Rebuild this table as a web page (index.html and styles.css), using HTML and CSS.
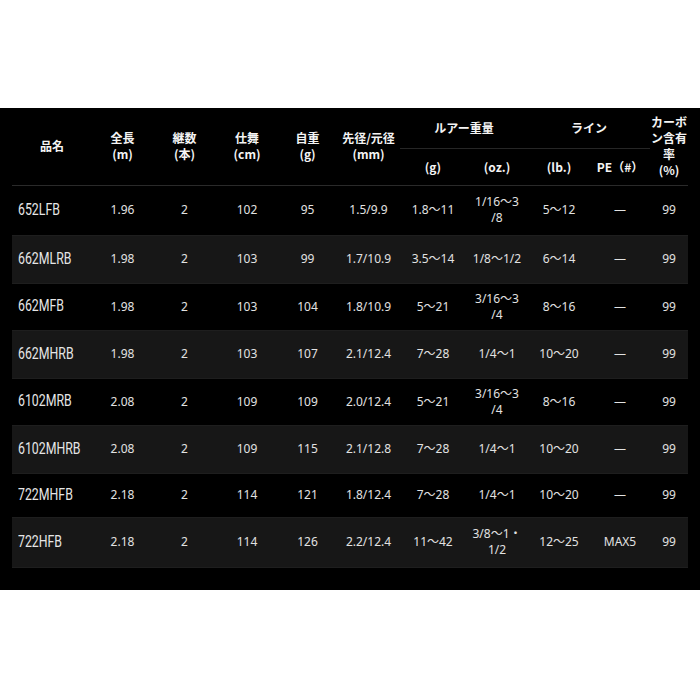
FILE: index.html
```html
<!DOCTYPE html>
<html lang="ja">
<head>
<meta charset="utf-8">
<title>Spec</title>
<link rel="stylesheet" href="styles.css">
</head>
<body>
<div class="panel">
  <table class="spec">
    <colgroup>
      <col class="c-name"><col class="c-len"><col class="c-pc"><col class="c-cl"><col class="c-wt"><col class="c-dia"><col class="c-g"><col class="c-oz"><col class="c-lb"><col class="c-pe"><col class="c-cb">
    </colgroup>
    <thead>
      <tr class="h1">
        <th rowspan="2" class="hname">品名</th>
        <th rowspan="2">全長<br>(m)</th>
        <th rowspan="2">継数<br>(本)</th>
        <th rowspan="2">仕舞<br>(cm)</th>
        <th rowspan="2">自重<br>(g)</th>
        <th rowspan="2">先径/元径<br>(mm)</th>
        <th colspan="2" class="group">ルアー重量</th>
        <th colspan="2" class="group">ライン</th>
        <th rowspan="2">カーボ<br>ン含有<br>率<br>(%)</th>
      </tr>
      <tr class="h2">
        <th>(g)</th>
        <th>(oz.)</th>
        <th>(lb.)</th>
        <th>PE（#）</th>
      </tr>
    </thead>
    <tbody>
      <tr class="r50"><td class="name"><span class="model">652LFB</span></td><td>1.96</td><td>2</td><td>102</td><td>95</td><td>1.5/9.9</td><td>1.8～11</td><td>1/16～3<br>/8</td><td>5～12</td><td>—</td><td>99</td></tr>
      <tr class="alt"><td class="name"><span class="model">662MLRB</span></td><td>1.98</td><td>2</td><td>103</td><td>99</td><td>1.7/10.9</td><td>3.5～14</td><td>1/8～1/2</td><td>6～14</td><td>—</td><td>99</td></tr>
      <tr class="r47"><td class="name"><span class="model">662MFB</span></td><td>1.98</td><td>2</td><td>103</td><td>104</td><td>1.8/10.9</td><td>5～21</td><td>3/16～3<br>/4</td><td>8～16</td><td>—</td><td>99</td></tr>
      <tr class="alt"><td class="name"><span class="model">662MHRB</span></td><td>1.98</td><td>2</td><td>103</td><td>107</td><td>2.1/12.4</td><td>7～28</td><td>1/4～1</td><td>10～20</td><td>—</td><td>99</td></tr>
      <tr class="r47"><td class="name"><span class="model">6102MRB</span></td><td>2.08</td><td>2</td><td>109</td><td>109</td><td>2.0/12.4</td><td>5～21</td><td>3/16～3<br>/4</td><td>8～16</td><td>—</td><td>99</td></tr>
      <tr class="alt"><td class="name"><span class="model">6102MHRB</span></td><td>2.08</td><td>2</td><td>109</td><td>115</td><td>2.1/12.8</td><td>7～28</td><td>1/4～1</td><td>10～20</td><td>—</td><td>99</td></tr>
      <tr class="r44"><td class="name"><span class="model">722MHFB</span></td><td>2.18</td><td>2</td><td>114</td><td>121</td><td>1.8/12.4</td><td>7～28</td><td>1/4～1</td><td>10～20</td><td>—</td><td>99</td></tr>
      <tr class="alt r50"><td class="name"><span class="model">722HFB</span></td><td>2.18</td><td>2</td><td>114</td><td>126</td><td>2.2/12.4</td><td>11～42</td><td>3/8～1・<br>1/2</td><td>12～25</td><td>MAX5</td><td>99</td></tr>
    </tbody>
  </table>
</div>
</body>
</html>
```

FILE: styles.css
```css
html, body {
  margin: 0;
  padding: 0;
  background: #ffffff;
}

body {
  padding-top: 108px;
}

.panel {
  background: #000000;
  height: 482px;
  padding: 0 12px;
  box-sizing: border-box;
}

.spec {
  width: 676px;
  border-collapse: collapse;
  table-layout: fixed;
  font-family: "Noto Sans", "Noto Sans CJK JP", sans-serif;
  font-size: 12px;
  color: #e2e2e2;
}

.c-name { width: 80px; }
.c-len { width: 61px; }
.c-pc { width: 63px; }
.c-cl { width: 62px; }
.c-wt { width: 59px; }
.c-dia { width: 63px; }
.c-g { width: 66px; }
.c-oz { width: 62px; }
.c-lb { width: 62px; }
.c-pe { width: 60px; }
.c-cb { width: 38px; }

.spec th {
  font-family: "Noto Sans CJK JP", sans-serif;
  font-weight: bold;
  font-size: 12px;
  line-height: 16px;
  color: #f4f4f4;
  text-align: center;
  vertical-align: middle;
  padding: 0;
  white-space: nowrap;
}

.h1 { height: 40px; }
.h2 { height: 37px; }

.h1 th.group {
  border-bottom: 1px solid #262626;
}

.h2 th {
  border-bottom: 1px solid #2a2a2a;
}

thead .h1 th[rowspan] {
  border-bottom: 1px solid #2a2a2a;
}

.spec td {
  text-align: center;
  vertical-align: middle;
  padding: 0;
  line-height: 16px;
  height: 47px;
  white-space: nowrap;
  border-bottom: 1px solid #1e1e1e;
}

.spec tr.r50 td { height: 49px; }
.spec tr.r47 td { height: 46px; }
.spec tr.r44 td { height: 43px; }

.spec tr.alt td {
  background: #171717;
}

.spec td.name {
  text-align: left;
  padding-left: 6px;
}

.model {
  display: inline-block;
  font-family: Roboto, "Noto Sans", sans-serif;
  font-size: 16px;
  color: #e6e6e6;
  transform: scaleX(0.77);
  transform-origin: left center;
}
```
